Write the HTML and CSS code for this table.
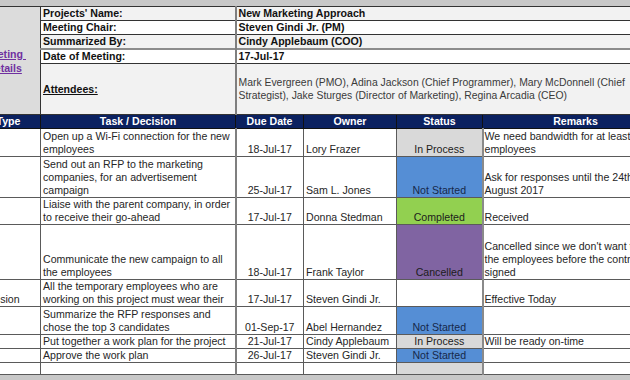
FILE: index.html
```html
<!DOCTYPE html>
<html>
<head>
<meta charset="utf-8">
<link rel="stylesheet" href="styles.css">
</head>
<body>
<div class="sheet">
  <table class="grid">
    <colgroup>
      <col class="c-type">
      <col class="c-task">
      <col class="c-due">
      <col class="c-owner">
      <col class="c-status">
      <col class="c-remarks">
    </colgroup>
    <tbody>
      <tr class="r14 alt">
        <td class="side" rowspan="5"><a class="link" href="#">Meeting&nbsp;<br>Details</a></td>
        <td class="label">Projects' Name:</td>
        <td class="value" colspan="4">New Marketing Approach</td>
      </tr>
      <tr class="r14">
        <td class="label">Meeting Chair:</td>
        <td class="value" colspan="4">Steven Gindi Jr. (PM)</td>
      </tr>
      <tr class="r14 alt">
        <td class="label">Summarized By:</td>
        <td class="value" colspan="4">Cindy Applebaum (COO)</td>
      </tr>
      <tr class="r14 dbl">
        <td class="label">Date of Meeting:</td>
        <td class="value" colspan="4">17-Jul-17</td>
      </tr>
      <tr class="r51 alt">
        <td class="label mid"><u>Attendees:</u></td>
        <td class="attend" colspan="4">Mark Evergreen (PMO), Adina Jackson (Chief Programmer), Mary McDonnell (Chief<br>Strategist), Jake Sturges (Director of Marketing), Regina Arcadia (CEO)</td>
      </tr>
      <tr class="r14 head">
        <td>Type</td>
        <td>Task / Decision</td>
        <td>Due Date</td>
        <td>Owner</td>
        <td>Status</td>
        <td>Remarks</td>
      </tr>
      <tr class="r28">
        <td class="type"></td>
        <td class="task">Open up a Wi-Fi connection for the new<br>employees</td>
        <td class="due">18-Jul-17</td>
        <td class="owner">Lory Frazer</td>
        <td class="status s-process">In Process</td>
        <td class="remarks">We need bandwidth for at least 20<br>employees</td>
      </tr>
      <tr class="r41">
        <td class="type"></td>
        <td class="task">Send out an RFP to the marketing<br>companies, for an advertisement<br>campaign</td>
        <td class="due">25-Jul-17</td>
        <td class="owner">Sam L. Jones</td>
        <td class="status s-notstarted">Not Started</td>
        <td class="remarks">Ask for responses until the 24th of<br>August 2017</td>
      </tr>
      <tr class="r27">
        <td class="type"></td>
        <td class="task">Liaise with the parent company, in order<br>to receive their go-ahead</td>
        <td class="due">17-Jul-17</td>
        <td class="owner">Donna Stedman</td>
        <td class="status s-completed">Completed</td>
        <td class="remarks">Received</td>
      </tr>
      <tr class="r55">
        <td class="type"></td>
        <td class="task">Communicate the new campaign to all<br>the employees</td>
        <td class="due">18-Jul-17</td>
        <td class="owner">Frank Taylor</td>
        <td class="status s-cancelled">Cancelled</td>
        <td class="remarks">Cancelled since we don't want to inform<br>the employees before the contract is<br>signed</td>
      </tr>
      <tr class="r27">
        <td class="type">Decision</td>
        <td class="task">All the temporary employees who are<br>working on this project must wear their</td>
        <td class="due">17-Jul-17</td>
        <td class="owner">Steven Gindi Jr.</td>
        <td class="status"></td>
        <td class="remarks">Effective Today</td>
      </tr>
      <tr class="r28">
        <td class="type"></td>
        <td class="task">Summarize the RFP responses and<br>chose the top 3 candidates</td>
        <td class="due">01-Sep-17</td>
        <td class="owner">Abel Hernandez</td>
        <td class="status s-notstarted">Not Started</td>
        <td class="remarks"></td>
      </tr>
      <tr class="r13">
        <td class="type"></td>
        <td class="task">Put together a work plan for the project</td>
        <td class="due">21-Jul-17</td>
        <td class="owner">Cindy Applebaum</td>
        <td class="status s-process">In Process</td>
        <td class="remarks">Will be ready on-time</td>
      </tr>
      <tr class="r14">
        <td class="type"></td>
        <td class="task">Approve the work plan</td>
        <td class="due">26-Jul-17</td>
        <td class="owner">Steven Gindi Jr.</td>
        <td class="status s-notstarted">Not Started</td>
        <td class="remarks"></td>
      </tr>
      <tr class="r11">
        <td class="type"></td>
        <td class="task"></td>
        <td class="due"></td>
        <td class="owner"></td>
        <td class="status s-process"></td>
        <td class="remarks"></td>
      </tr>
    </tbody>
  </table>
</div>
</body>
</html>
```
FILE: styles.css
```css
html, body {
  margin: 0;
  padding: 0;
}
body {
  width: 630px;
  height: 380px;
  overflow: hidden;
  background: #c8c8c8;
  font-family: "Liberation Sans", Arial, sans-serif;
  font-size: 10.6px;
  color: #222;
}
.sheet {
  padding-top: 6px;
  margin-left: -24px;
  width: 700px;
}
.grid {
  border-collapse: collapse;
  table-layout: fixed;
  width: 692px;
}
.c-type { width: 64px; }
.c-task { width: 195px; }
.c-due { width: 68px; }
.c-owner { width: 93px; }
.c-status { width: 86px; }
.c-remarks { width: 186px; }

.grid td {
  padding: 0 2px;
  overflow: hidden;
  white-space: nowrap;
  line-height: 13px;
  vertical-align: bottom;
  border: 1px solid #5a5a5a;
  background: #fff;
  color: #262626;
}

.r11 { height: 12px; }
.r13 { height: 13px; }
.r14 { height: 14px; }
.r27 { height: 27px; }
.r28 { height: 28px; }
.r41 { height: 41px; }
.r51 { height: 51px; }
.r55 { height: 55px; }

/* top info block */
.grid td.side {
  background: #dcdcdc;
  vertical-align: middle;
  text-align: center;
  padding-right: 10px;
  border-color: #333;
}
.link {
  color: #7030a0;
  font-weight: bold;
  text-decoration: underline;
  line-height: 14px;
}
.grid td.label {
  font-weight: bold;
  color: #111;
  border-color: #333;
  vertical-align: middle;
}
.grid td.value {
  font-weight: bold;
  color: #111;
  border-color: #333;
  border-left: 2px solid #7f7f7f;
  vertical-align: middle;
}
.alt td.label,
.alt td.value,
.alt td.attend {
  background: #f2f2f2;
}
.dbl td.label,
.dbl td.value {
  border-top: 2px solid #8c8c8c;
}
.grid td.attend {
  vertical-align: middle;
  color: #3a3a3a;
  font-size: 10.4px;
  line-height: 13.5px;
  border-color: #333;
  border-left: 2px solid #7f7f7f;
}
.grid td.mid {
  vertical-align: middle;
}

/* header */
.head td {
  background: #0b2160;
  color: #fff;
  font-weight: bold;
  text-align: center;
  vertical-align: middle;
  border-color: #111;
}

/* data rows */
.grid td.due {
  text-align: center;
  border-left: 2px solid #7f7f7f;
}
.grid td.status {
  text-align: center;
  color: #1c1c1c;
}
.grid td.remarks {
  padding-left: 1px;
  border-left: 2px solid #8a8a8a;
}
.grid td.s-process { background: #d9d9d9; }
.grid td.s-notstarted { background: #558ed5; color: #15284a; }
.grid td.s-completed { background: #92d050; }
.grid td.s-cancelled { background: #8064a2; }
```
